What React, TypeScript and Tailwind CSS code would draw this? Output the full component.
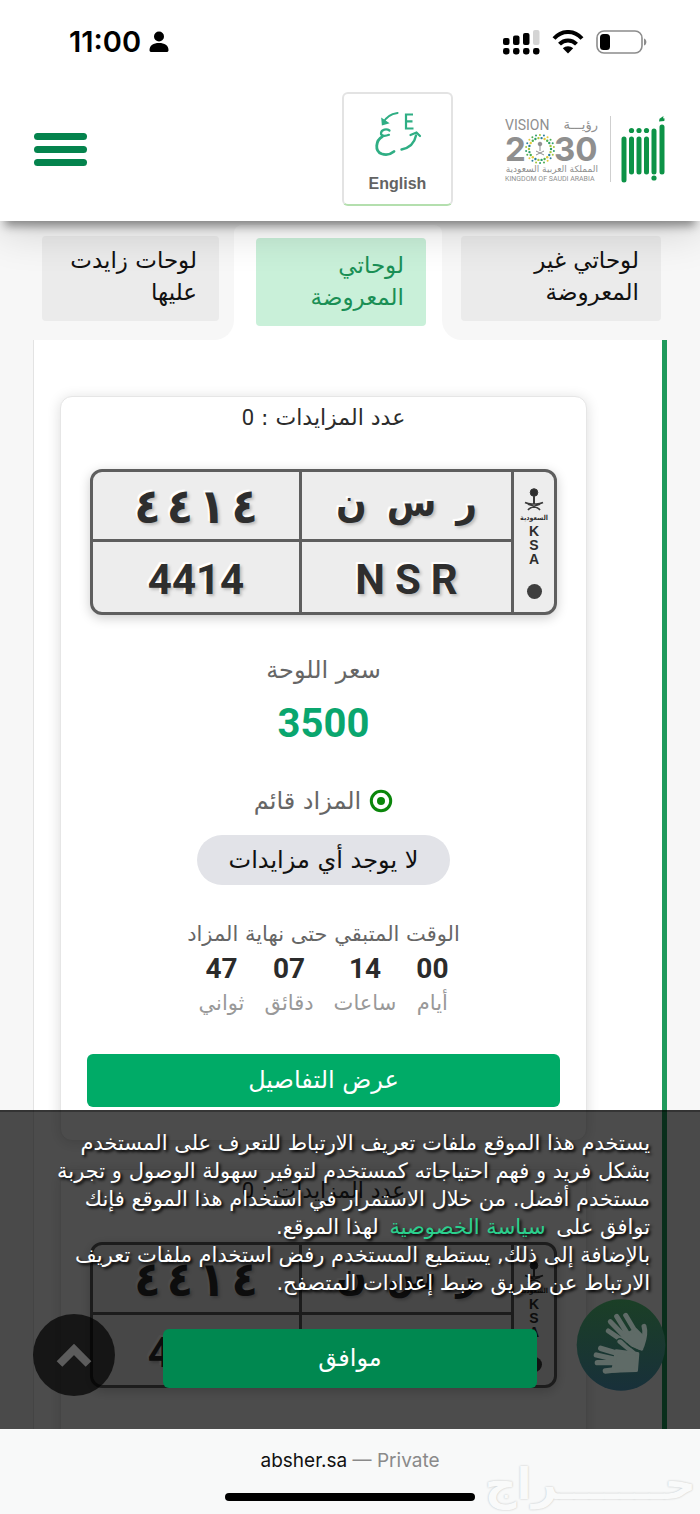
import { useState } from "react";
import clsx from "clsx";

const tabs = [
  { id: "hidden", lines: ["لوحاتي غير", "المعروضة"] },
  { id: "listed", lines: ["لوحاتي", "المعروضة"] },
  { id: "bids", lines: ["لوحات زايدت", "عليها"] },
];

const plates = [
  {
    id: 1,
    bids: 0,
    arabicDigits: ["٤", "٤", "١", "٤"],
    arabicLetters: ["ن", "س", "ر"],
    digits: "4414",
    letters: ["N", "S", "R"],
    price: "3500",
    remaining: [
      { value: "00", label: "أيام" },
      { value: "14", label: "ساعات" },
      { value: "07", label: "دقائق" },
      { value: "47", label: "ثواني" },
    ],
  },
  {
    id: 2,
    bids: 0,
    arabicDigits: ["٤", "٤", "١", "٤"],
    arabicLetters: ["ن", "س", "ر"],
    digits: "4414",
    letters: ["N", "S", "R"],
    price: "3500",
    remaining: [
      { value: "00", label: "أيام" },
      { value: "14", label: "ساعات" },
      { value: "07", label: "دقائق" },
      { value: "47", label: "ثواني" },
    ],
  },
];

type Plate = (typeof plates)[number];

function StatusBar() {
  return (
    <div dir="ltr" className="flex items-center justify-between pl-[69px] pr-[52px] pt-[26px]">
      <div className="flex items-center gap-2">
        <span className="font-[Inter] text-[29px] leading-8 font-semibold text-black">
          11:00
        </span>
        <svg width="20" height="22" viewBox="0 0 20 22" aria-hidden="true">
          <circle cx="10" cy="5.5" r="5" />
          <path d="M0.5 19C0.5 14.5 4.5 12 10 12s9.500 2.500 9.500 7c0 1.500-.8 2-2 2h-15c-1.200 0-2-.5-2-2z" />
        </svg>
      </div>
      <div className="flex items-center gap-3">
        <svg width="37" height="26" viewBox="0 0 37 26" aria-hidden="true">
          <rect x="0" y="9" width="6.500" height="7" rx="2" />
          <rect x="10" y="6.500" width="6.500" height="9.500" rx="2" />
          <rect x="20" y="4" width="6.500" height="12" rx="2" />
          <rect x="30" y="1" width="6.500" height="15" rx="2" fill="#d4d4d4" />
          {[0, 10, 20, 30].map((x) => (
            <rect key={x} x={x} y="19" width="6.500" height="6.500" rx="2.400" />
          ))}
        </svg>
        <svg width="32" height="24" viewBox="0 0 32 24" aria-hidden="true">
          <g fill="none" stroke="#000" strokeWidth="4">
            <path d="M2 8.500C10-.2 22-.2 30 8.500" />
            <path d="M7.500 14.200c4.800-5 12.200-5 17 0" />
          </g>
          <path d="M16 23.500l-5.200-5.200c2.800-2.700 7.600-2.700 10.400 0z" />
        </svg>
        <svg width="52" height="24" viewBox="0 0 52 24" aria-hidden="true">
          <rect x="1" y="1" width="45" height="22" rx="7" fill="none" stroke="#8c8c8c" strokeWidth="1.600" />
          <rect x="4" y="4" width="10" height="16" rx="3.500" />
          <path d="M48 8.500c3.200 1 3.200 6 0 7z" fill="#8c8c8c" />
        </svg>
      </div>
    </div>
  );
}

function VisionLogo() {
  const dots = Array.from({ length: 22 }, (_, i) => (i * Math.PI * 2) / 22);
  const colors = ["#2f9e6b", "#a6c63c", "#2b7f9b", "#e2c93b", "#4cae4f"];
  return (
    <svg width="94" height="66" viewBox="0 0 94 66" role="img" aria-label="Vision 2030" className="overflow-visible">
      <g fill="#8f8f8f">
        <text x="0" y="14" className="font-[Roboto] text-[14px]">VISION</text>
        <text x="93" y="13" direction="rtl" className="font-['DejaVu_Sans',sans-serif] text-[13px]">
          رؤيـــة
        </text>
        <text x="0" y="45" className="font-[Inter] text-[33px] font-bold">2</text>
        <text x="49" y="45" className="font-[Inter] text-[33px] font-bold">30</text>
        <text x="93" y="56" direction="rtl" className="font-['DejaVu_Sans',sans-serif] text-[9px]">
          المملكة العربية السعودية
        </text>
        <text x="0" y="65" className="font-[Roboto] text-[7px]">
          KINGDOM OF SAUDI ARABIA
        </text>
      </g>
      {dots.map((a, i) => (
        <g key={i} fill={colors[i % colors.length]}>
          <circle cx={35 + Math.cos(a) * 11} cy={33 + Math.sin(a) * 11} r="1.200" />
          <circle cx={35 + Math.cos(a + 0.14) * 14} cy={33 + Math.sin(a + 0.14) * 14} r="1" />
        </g>
      ))}
      <g stroke="#8f8f8f" fill="none">
        <path d="M35 29v6M31 39l8-4M39 39l-8-4" />
        <circle cx="35" cy="28" r="1.800" fill="#8f8f8f" />
      </g>
    </svg>
  );
}

function AbsherLogo() {
  return (
    <svg width="46" height="68" viewBox="0 0 46 68" role="img" aria-label="أبشر">
      <g stroke="#0d9347" strokeWidth="5" strokeLinecap="round">
        <path d="M4 24v41M11.500 24v33M19 24v33M26.500 24v33M34 16v41M42 12v45" />
      </g>
      <g fill="#0d9347">
        <circle cx="11.500" cy="15.500" r="2.600" />
        <circle cx="19" cy="15.500" r="2.600" />
        <circle cx="26.500" cy="15.500" r="2.600" />
        <circle cx="34" cy="63" r="2.600" />
        <path d="M43.500 1l-.4 2.200 1.500.4-.3 2.400-5.300.6.500-2.800z" />
      </g>
    </svg>
  );
}

function LanguageIcon() {
  return (
    <svg width="48" height="48" viewBox="0 0 48 48" fill="none" stroke="#2fae84" strokeLinecap="round" aria-hidden="true">
      <path d="M23.500 3C17 4 12 7 9.500 12.500" strokeWidth="2.200" />
      <path d="M8 9l.5 5.500L14 13z" strokeWidth="1.400" fill="#2fae84" />
      <path d="M15.500 20.500c-3-2.200-8-1-8.500 2.500-.3 3 3.500 3.500 8 1.800" strokeWidth="2.200" />
      <path d="M8.500 26.500C1.500 30.500.5 41 7.500 43.800c4 1.400 9 .6 12.500-2.300" strokeWidth="2.800" />
      <path d="M39 4.500h-7v14h7.500M32 11.300h6.500" strokeWidth="2.200" strokeLinecap="butt" />
      <path d="M27.500 39.500C35 38 40.500 33 42 25.500" strokeWidth="2.400" />
      <path d="M36.500 25l6-2.500 3.500 3.500" strokeWidth="2.200" />
    </svg>
  );
}

function Header() {
  return (
    <header className="relative z-10 shrink-0 bg-white pb-[15px] shadow-[0_10px_9px_-5px_rgba(0,0,0,0.4),0_10px_40px_rgba(0,0,0,0.16)]">
      <StatusBar />
      <div dir="ltr" className="mt-[34px] flex items-center justify-between px-[34px]">
        <button type="button" aria-label="القائمة" className="flex w-[53px] flex-col gap-[6px]">
          <span className="h-[7px] rounded-full bg-[#04834d]" />
          <span className="h-[7px] rounded-full bg-[#04834d]" />
          <span className="h-[7px] rounded-full bg-[#04834d]" />
        </button>
        <div className="flex items-center">
          <button
            type="button"
            className="mr-[52px] flex h-[114px] w-[111px] flex-col items-center justify-between rounded-md border-2 border-[#e3e3e3] border-b-[#b4dfae] pt-4 pb-2"
          >
            <LanguageIcon />
            <span className="font-['Liberation_Sans'] text-base leading-6 font-bold text-[#636363]">
              English
            </span>
          </button>
          <VisionLogo />
          <span className="mr-[9px] ml-[11px] h-[66px] w-px bg-[#cfcfcf]" />
          <AbsherLogo />
        </div>
      </div>
    </header>
  );
}

function Tabs({ active, onChange }: { active: string; onChange: (id: string) => void }) {
  return (
    <div role="tablist" className="flex bg-white text-[23px] leading-8">
      {tabs.map(({ id, lines }, i) => {
        const selected = id === active;
        return (
          <div
            key={id}
            className={clsx(
              "flex bg-[#f7f7f7]",
              i === 0 && "grow rounded-bl-[20px] pt-[15px] pr-[39px] pb-[19px] pl-[19px]",
              i === 1 && "w-[208px] shrink-0 pt-1",
              i === 2 && "w-[234px] shrink-0 rounded-br-[20px] pt-[15px] pr-[15px] pb-[19px] pl-[42px]"
            )}
          >
            <div className={clsx("flex grow", selected && "rounded-t-lg bg-white pt-[13px] pr-4 pb-[14px] pl-[22px]")}>
              <button
                type="button"
                role="tab"
                aria-selected={selected}
                onClick={() => onChange(id)}
                className={clsx(
                  "grow rounded px-[22px] text-right font-medium",
                  selected
                    ? "bg-[#c9f0d9] pt-[11px] pb-[13px] text-[#1a8f55]"
                    : "bg-[#ebebeb] pt-2 pb-[13px] text-[#111]"
                )}
              >
                {lines.map((line) => (
                  <span key={line} className="block whitespace-nowrap">
                    {line}
                  </span>
                ))}
              </button>
            </div>
          </div>
        );
      })}
    </div>
  );
}

function NumberPlate({ plate }: { plate: Plate }) {
  const cell = "flex items-center justify-center border-[#5e5e5e]";
  return (
    <div
      dir="ltr"
      className="mx-[3px] mt-[30px] flex h-[146px] overflow-hidden rounded-xl border-[3px] border-[#5e5e5e] bg-[#ededed] font-['DejaVu_Sans_Condensed','DejaVu_Sans',sans-serif] text-[#2e2e2e] shadow-[0_3px_12px_rgba(0,0,0,0.2)]"
    >
      <div className="grid grow grid-cols-2 grid-rows-2 font-bold [text-shadow:-2px_-2px_1px_#fff,2px_2px_3px_#bbb]">
        <div className={clsx(cell, "gap-[6px] border-r-[3px] border-b-[3px] text-[48px] leading-none")}>
          {plate.arabicDigits.map((d, i) => (
            <span key={i}>{d}</span>
          ))}
        </div>
        <div className={clsx(cell, "gap-5 border-b-[3px] pb-2 text-[40px] leading-none")}>
          {plate.arabicLetters.map((l) => (
            <span key={l}>{l}</span>
          ))}
        </div>
        <div className={clsx(cell, "border-r-[3px] pt-1 font-[Roboto] text-[42px]")}>{plate.digits}</div>
        <div className={clsx(cell, "gap-[10px] pt-1 font-[Roboto] text-[42px]")}>
          {plate.letters.map((l) => (
            <span key={l}>{l}</span>
          ))}
        </div>
      </div>
      <div className="flex w-[43px] shrink-0 flex-col items-center border-l-[3px] border-[#5e5e5e] pt-4">
        <svg width="24" height="24" viewBox="0 0 24 24" fill="none" stroke="#3a3a3a" aria-hidden="true">
          <circle cx="12" cy="4.500" r="3.800" fill="#2e2e2e" />
          <path d="M12 8v8" strokeWidth="2" />
          <path d="M3 14.500c4 2 6 1.500 9 1.500s5 .5 9-1.500M6 22c2-3 10-5 12-6M18 22c-2-3-10-5-12-6" strokeWidth="1.600" />
        </svg>
        <span className="text-[7px] leading-3 font-bold">السعودية</span>
        <span className="flex flex-col items-center font-['Liberation_Sans'] text-sm leading-[14px] font-bold">
          <span>K</span>
          <span>S</span>
          <span>A</span>
        </span>
        <span className="mt-[18px] size-[15px] rounded-full bg-[#3f3f3f]" />
      </div>
    </div>
  );
}

function PlateCard({ plate }: { plate: Plate }) {
  return (
    <article className="flex flex-col rounded-xl border border-[#e6e6e6] bg-white px-[26px] pb-[33px] text-center shadow-[0_2px_14px_rgba(0,0,0,0.14)]">
      <h2 className="text-[22px] leading-[42px] text-[#2b2b2b]">
        عدد المزايدات : <span className="font-[Roboto]">{plate.bids}</span>
      </h2>
      <NumberPlate plate={plate} />
      <p className="mt-[35px] text-2xl leading-10 text-[#666]">سعر اللوحة</p>
      <p className="mt-[10px] font-[Roboto] text-[40px] leading-[48px] font-bold text-[#0aa66e]">
        {plate.price}
      </p>
      <p className="mt-[33px] flex items-center justify-center gap-2 text-2xl leading-10 text-[#666]">
        <svg width="24" height="24" viewBox="0 0 24 24" aria-hidden="true">
          <circle cx="12" cy="12" r="9.700" fill="none" stroke="#0b860b" strokeWidth="3" />
          <circle cx="12" cy="12" r="4" fill="#0b860b" />
        </svg>
        المزاد قائم
      </p>
      <p className="mx-auto mt-[14px] rounded-full bg-[#e2e3e8] px-8 text-2xl leading-[50px] text-[#111]">
        لا يوجد أي مزايدات
      </p>
      <p className="mt-[33px] text-[21px] leading-8 text-[#666]">الوقت المتبقي حتى نهاية المزاد</p>
      <dl className="flex justify-center gap-5">
        {plate.remaining.map(({ value, label }) => (
          <div key={label} className="flex flex-col-reverse">
            <dt className="text-[21px] leading-8 text-[#999]">{label}</dt>
            <dd className="font-[Roboto] text-[28px] leading-[37px] font-bold text-[#2b2b2b]">{value}</dd>
          </div>
        ))}
      </dl>
      <button type="button" className="mt-[35px] rounded-md bg-[#00ab67] text-2xl leading-[53px] text-white">
        عرض التفاصيل
      </button>
    </article>
  );
}

function CookieNotice() {
  return (
    <section className="absolute inset-x-0 bottom-0 flex h-[319px] flex-col border-t-2 border-black/30 bg-black/70 px-[50px] pt-[17px]">
      <p className="text-[21px] leading-7 whitespace-nowrap text-white [text-shadow:2px_2px_3px_#000]">
        يستخدم هذا الموقع ملفات تعريف الارتباط للتعرف على المستخدم
        <br />
        بشكل فريد و فهم احتياجاته كمستخدم لتوفير سهولة الوصول و تجربة
        <br />
        مستخدم أفضل. من خلال الاستمرار في استخدام هذا الموقع فإنك
        <br />
        توافق على{" "}
        <a href="#privacy" className="mx-1 text-[#2bd08e]">
          سياسة الخصوصية
        </a>{" "}
        لهذا الموقع.
        <br />
        بالإضافة إلى ذلك, يستطيع المستخدم رفض استخدام ملفات تعريف
        <br />
        الارتباط عن طريق ضبط إعدادات المتصفح.
      </p>
      <button
        type="button"
        className="mx-auto mt-8 w-[374px] rounded-md bg-[#008850] text-2xl leading-[59px] text-white"
      >
        موافق
      </button>
    </section>
  );
}

function FloatingButtons() {
  return (
    <div dir="ltr" className="absolute bottom-[33px] left-[33px] right-[34px] flex items-end justify-between pointer-events-none">
      <button
        type="button"
        aria-label="إلى الأعلى"
        className="pointer-events-auto flex size-[82px] items-center justify-center rounded-full bg-black/70"
      >
        <svg width="36" height="26" viewBox="0 0 36 26" fill="none" stroke="#5c5c5c" strokeWidth="8" aria-hidden="true">
          <path d="M3.500 22L18 7.500 32.500 22" />
        </svg>
      </button>
      <button type="button" aria-label="لغة الإشارة" className="pointer-events-auto mb-[5px]">
        <svg width="90" height="92" viewBox="680 24 268 276" aria-hidden="true">
          <defs>
            <linearGradient id="sign" x1="0" y1="0" x2="0" y2="1">
              <stop offset="0" stopColor="#1b3f26" />
              <stop offset="1" stopColor="#18303a" />
            </linearGradient>
          </defs>
          <ellipse cx="814" cy="162" rx="133" ry="137" fill="url(#sign)" />
          <g stroke="#5f6b67" fill="#5f6b67" strokeLinecap="round" strokeLinejoin="round">
            <path d="M801 76l36 58M782 92l48 50M776 120l50 34M828 73l32 54" strokeWidth="15" fill="none" />
            <path d="M883 106c6 20 2 36-6 58" strokeWidth="15" fill="none" />
            <path d="M824 134l34-18 24 24-6 34-26-8-22-22z" strokeWidth="10" />
          </g>
          <g stroke="#5f6b67" fill="#5f6b67" strokeLinecap="round" strokeLinejoin="round">
            <path d="M753 172l60 18M740 192l60 14M743 215h60M767 240l50-6" strokeWidth="16" fill="none" />
            <path d="M808 150l44 36" strokeWidth="14" fill="none" />
            <path d="M800 180l64 8-4 50-70 2z" strokeWidth="10" />
          </g>
          <path
            d="M812 170c-16-10-14-26 0-27 10 2 20 20 34 26 10 4 18 6 22 12"
            stroke="#1a3a30"
            strokeWidth="4"
            fill="none"
            strokeLinecap="round"
          />
        </svg>
      </button>
    </div>
  );
}

function BrowserBar() {
  return (
    <footer
      dir="ltr"
      className="relative flex h-[85px] shrink-0 flex-col items-center justify-between bg-[#f8f9f9] pt-[18px] pb-[13px]"
    >
      <p className="font-[Inter] text-[19px] leading-7 text-[#111]">
        absher.sa <span className="text-[#8a8a8a]">— Private</span>
      </p>
      <span className="h-2 w-[250px] rounded-full bg-black" />
      <span
        dir="rtl"
        className="absolute right-1 bottom-1 text-[44px] leading-[52px] font-bold text-[#f9fafa] [text-shadow:0_0_2px_#b9bcbc]"
      >
        حـــــــراج
      </span>
    </footer>
  );
}

export default function App() {
  const [activeTab, setActiveTab] = useState("listed");

  return (
    <div
      dir="rtl"
      lang="ar"
      className="flex h-screen flex-col overflow-hidden bg-[#f7f7f7] font-['DejaVu_Sans',sans-serif]"
    >
      <Header />
      <main className="relative min-h-0 grow overflow-hidden">
        <Tabs active={activeTab} onChange={setActiveTab} />
        <div className="mx-[33px] flex flex-col gap-7 border-r-[5px] border-l border-r-[#1f9a5c] border-l-[#e3e3e3] bg-white pt-[56px] pr-[75px] pl-[26px]">
          {plates.map((plate) => (
            <PlateCard key={plate.id} plate={plate} />
          ))}
        </div>
        <CookieNotice />
        <FloatingButtons />
      </main>
      <BrowserBar />
    </div>
  );
}
